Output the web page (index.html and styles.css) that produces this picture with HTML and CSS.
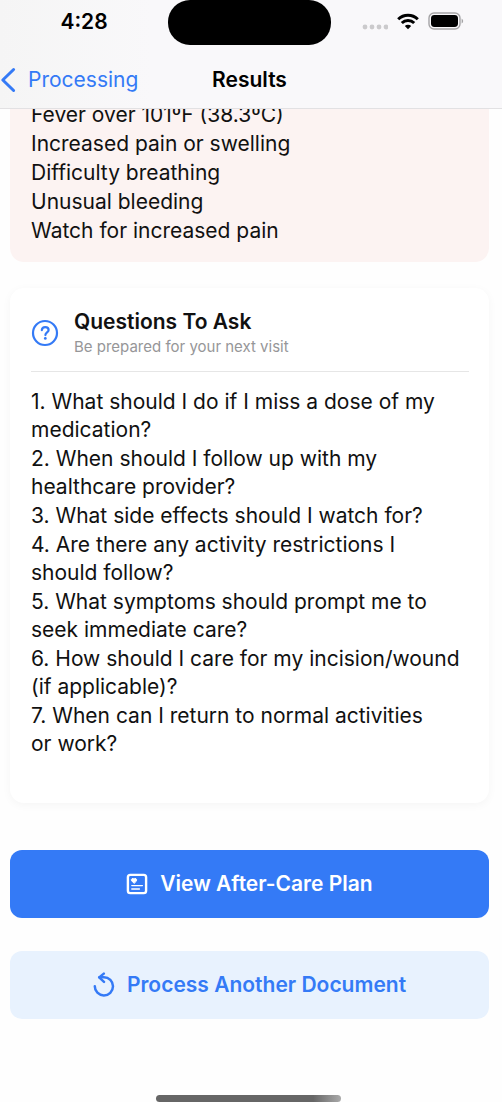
FILE: index.html
```html
<!DOCTYPE html>
<html lang="en">
<head>
<meta charset="utf-8">
<meta name="viewport" content="width=device-width, initial-scale=1">
<title>Results</title>
<link rel="stylesheet" href="styles.css">
</head>
<body>
<header class="top">
  <div class="status">
    <span class="time">4:28</span>
    <span class="island"></span>
    <span class="indicators">
      <svg class="dots" width="26" height="6" viewBox="0 0 26 6"><g fill="#cbcacc"><circle cx="3" cy="3" r="2.4"/><circle cx="10" cy="3" r="2.4"/><circle cx="17" cy="3" r="2.4"/><circle cx="24" cy="3" r="2.4"/></g></svg>
      <svg width="22" height="17" viewBox="0 0 22 17" fill="none" stroke="#000" stroke-width="3"><path d="M1.2 6.2a14 14 0 0 1 19.6 0"/><path d="M4.8 10a8.8 8.8 0 0 1 12.4 0"/><path d="M11 16.3 7.8 13a4.6 4.6 0 0 1 6.4 0z" fill="#000" stroke="none"/></svg>
      <svg width="36" height="18" viewBox="0 0 36 18"><rect x="1" y="1" width="31" height="16" rx="5" fill="none" stroke="#a5a4a6" stroke-width="1.4"/><rect x="3" y="3" width="27" height="12" rx="3.4"/><path d="M33.6 6.4q1.6 1 1.6 2.6t-1.6 2.6z" fill="#a5a4a6"/></svg>
    </span>
  </div>
  <nav class="nav">
    <a class="back" href="#">
      <svg width="16" height="26" viewBox="0 0 16 26" fill="none" stroke="#347af6" stroke-width="3" stroke-linecap="round" stroke-linejoin="round"><path d="M13.6 2.5 2.8 13l10.8 10.5"/></svg>
      Processing
    </a>
    <h1 class="title">Results</h1>
  </nav>
</header>
<main class="content">
  <section class="warnings">
    <ul class="lines">
      <li>Fever over 101ºF (38.3ºC)</li>
      <li>Increased pain or swelling</li>
      <li>Difficulty breathing</li>
      <li>Unusual bleeding</li>
      <li>Watch for increased pain</li>
    </ul>
  </section>
  <section class="card">
    <header class="card-head">
      <svg width="28" height="28" viewBox="0 0 28 28" fill="none" stroke="#347af6" stroke-width="2.2" stroke-linecap="round"><circle cx="14" cy="14" r="12"/><path d="M10.8 11.2c.2-1.9 1.5-3 3.4-3s3.4 1.1 3.4 2.9c0 2.4-3.2 2.4-3.2 5"/><circle cx="14.3" cy="19.4" r="1.4" fill="#347af6" stroke="none"/></svg>
      <div>
        <h2 class="card-title">Questions To Ask</h2>
        <p class="card-sub">Be prepared for your next visit</p>
      </div>
    </header>
    <ul class="lines questions">
      <li>1. What should I do if I miss a dose of my medication?</li>
      <li>2. When should I follow up with my healthcare provider?</li>
      <li>3. What side effects should I watch for?</li>
      <li>4. Are there any activity restrictions I<br>should follow?</li>
      <li>5. What symptoms should prompt me to seek immediate care?</li>
      <li>6. How should I care for my incision/wound (if applicable)?</li>
      <li>7. When can I return to normal activities<br>or work?</li>
    </ul>
  </section>
  <div class="actions">
    <button class="btn primary" type="button">
      <svg width="22" height="22" viewBox="0 0 22 22" fill="none" stroke="#fff" stroke-linecap="round"><rect x="1.9" y="1.9" width="18.2" height="18.2" rx="2.4" stroke-width="2.4"/><path d="M5.8 12.6h10.6M5.8 16h7.6" stroke-width="1.4"/><path d="M8 10.2 5.6 7.8a1.4 1.4 0 0 1 2.4-1.7 1.4 1.4 0 0 1 2.4 1.7z" fill="#fff" stroke-width="1"/></svg>
      View After-Care Plan
    </button>
    <button class="btn secondary" type="button">
      <svg width="22" height="26" viewBox="0 0 22 26" fill="none" stroke="#347af6" stroke-width="2.5" stroke-linecap="round" stroke-linejoin="round"><path d="M1.8 14.2a9.1 9.1 0 1 0 9.1-9H6.4"/><path d="M10.8 1.6 6.2 5.4l4.8 4.4"/></svg>
      Process Another Document
    </button>
  </div>
</main>
<div class="home"></div>
</body>
</html>
```
FILE: styles.css
```css
* { box-sizing: border-box; }
body {
  margin: 0;
  min-height: 100vh;
  background: #fefefe;
  color: #111;
  font-family: Inter, "Liberation Sans", sans-serif;
}
h1, h2, p, ul { margin: 0; padding: 0; }
.top {
  position: sticky;
  top: 0;
  z-index: 2;
  background: linear-gradient(90deg, #f5f5f5, #f9f8fa 30%, #f9f8fa);
  border-bottom: 1px solid #e2e1e3;
}
.status {
  display: grid;
  grid-template-columns: 1fr 163px 1fr;
  align-items: center;
  height: 52px;
  padding-right: 3px;
}
.time {
  justify-self: center;
  font-size: 21px;
  font-weight: 600;
  line-height: 24px;
  margin-bottom: 8px;
  color: #000;
}
.island {
  align-self: start;
  height: 45px;
  background: #000;
  border-radius: 22px;
}
.indicators {
  display: flex;
  justify-content: flex-end;
  align-items: center;
  gap: 9px;
  padding-right: 35px;
  margin-bottom: 10px;
}
.dots { margin-top: 12px; }
.nav {
  display: grid;
  grid-template-columns: 1fr auto 1fr;
  align-items: center;
  height: 56px;
  padding-right: 3px;
}
.back {
  display: flex;
  align-items: center;
  gap: 12px;
  color: #347af6;
  font-size: 21px;
  line-height: 28px;
  text-decoration: none;
}
.title {
  font-size: 21px;
  font-weight: 600;
  line-height: 28px;
  color: #000;
}
.content {
  margin-top: -8px;
  padding: 0 13px 83px 10px;
}
.lines {
  display: flex;
  flex-direction: column;
  gap: 1px;
  list-style: none;
  font-size: 21px;
  line-height: 28px;
}
.warnings {
  padding: 0 21px 17px;
  background: #fcf3f2;
  border-radius: 0 0 14px 14px;
}
.card {
  margin-top: 26px;
  padding: 20px 20px 45px 21px;
  background: #fff;
  border-radius: 14px;
  box-shadow: 0 2px 10px rgba(0, 0, 0, 0.04);
}
.card-head {
  display: flex;
  align-items: center;
  gap: 15px;
  padding-bottom: 13px;
  border-bottom: 1px solid #e6e6e6;
}
.card-title {
  font-size: 21px;
  font-weight: 600;
  line-height: 28px;
}
.card-sub {
  font-size: 15px;
  line-height: 22px;
  color: #969698;
}
.questions { margin-top: 16px; }
.actions {
  display: flex;
  flex-direction: column;
  gap: 33px;
  margin-top: 47px;
}
.btn {
  display: flex;
  align-items: center;
  justify-content: center;
  gap: 12px;
  height: 68px;
  border: 0;
  border-radius: 12px;
  font-family: inherit;
  font-size: 21px;
  font-weight: 600;
  line-height: 28px;
}
.primary { background: #347af6; color: #fff; }
.secondary { background: #e8f2fe; color: #347af6; }
.home {
  position: fixed;
  bottom: 0;
  left: 31%;
  width: 37%;
  height: 7px;
  border-radius: 4px;
  background: linear-gradient(90deg, #666, #666 85%, #aaa);
}
```
